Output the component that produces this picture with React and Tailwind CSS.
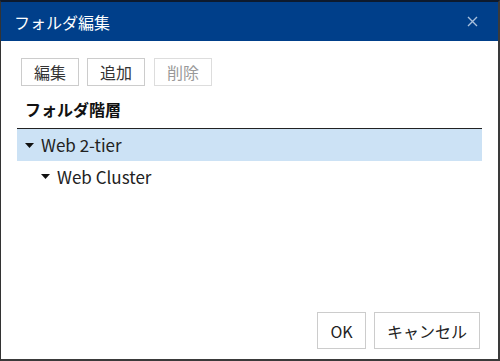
import { useState } from "react";

const font = { fontFamily: "'Noto Sans CJK JP', 'Noto Sans', sans-serif" };

const Caret = () => (
  <svg width="9" height="5" viewBox="0 0 9 5" className="shrink-0">
    <path d="M0 0 L9 0 L4.5 5 Z" fill="#111" />
  </svg>
);

export default function App() {
  const [selected, setSelected] = useState("web2tier");

  return (
    <div
      className="w-[500px] h-[361px] flex flex-col bg-white border-t-2 border-t-[#0d1a2e] border-l border-l-[#333] border-r-2 border-r-[#3a3a3a] border-b-2 border-b-[#3a3a3a] text-[#222]"
      style={font}
    >
      {/* header */}
      <div className="h-[39px] bg-[#003f8a] flex items-center justify-between pl-[13px] pr-[20px]">
        <span className="text-white text-[16px] leading-none">フォルダ編集</span>
        <button className="text-[#a9c0dc]">
          <svg width="11" height="11" viewBox="0 0 11 11">
            <path d="M1 1 L10 10 M10 1 L1 10" stroke="currentColor" strokeWidth="1.4" />
          </svg>
        </button>
      </div>

      {/* body */}
      <div className="flex-1 flex flex-col px-4 pt-[17px]">
        <div className="flex gap-2 pl-1">
          <button className="h-[28px] w-[58px] border border-[#ccc] text-[16px] text-[#333]">編集</button>
          <button className="h-[28px] w-[58px] border border-[#ccc] text-[16px] text-[#333]">追加</button>
          <button className="h-[28px] w-[58px] ml-px border border-[#ddd] text-[16px] text-[#999]">削除</button>
        </div>

        <div className="mt-[11px] pl-2 pb-[7px] border-b border-[#222] text-[16px] leading-[24px] font-bold text-[#111]">
          フォルダ階層
        </div>

        <div className="flex-1 flex flex-col text-[17px] text-[#222]">
          <div
            onClick={() => setSelected("web2tier")}
            className={`h-[32px] flex items-center gap-[7px] pl-2 ${selected === "web2tier" ? "bg-[#cce2f5]" : ""}`}
          >
            <Caret />
            <span>Web 2-tier</span>
          </div>
          <div
            onClick={() => setSelected("webcluster")}
            className={`h-[31px] flex items-center gap-[7px] pl-6 ${selected === "webcluster" ? "bg-[#cce2f5]" : ""}`}
          >
            <Caret />
            <span>Web Cluster</span>
          </div>
        </div>

        <div className="flex justify-end gap-2 pr-[2px] pb-[10px]">
          <button className="h-[37px] w-[49px] border border-[#ccc] text-[16px] text-[#222]">OK</button>
          <button className="h-[37px] w-[106px] border border-[#ccc] text-[16px] text-[#222]">キャンセル</button>
        </div>
      </div>
    </div>
  );
}
